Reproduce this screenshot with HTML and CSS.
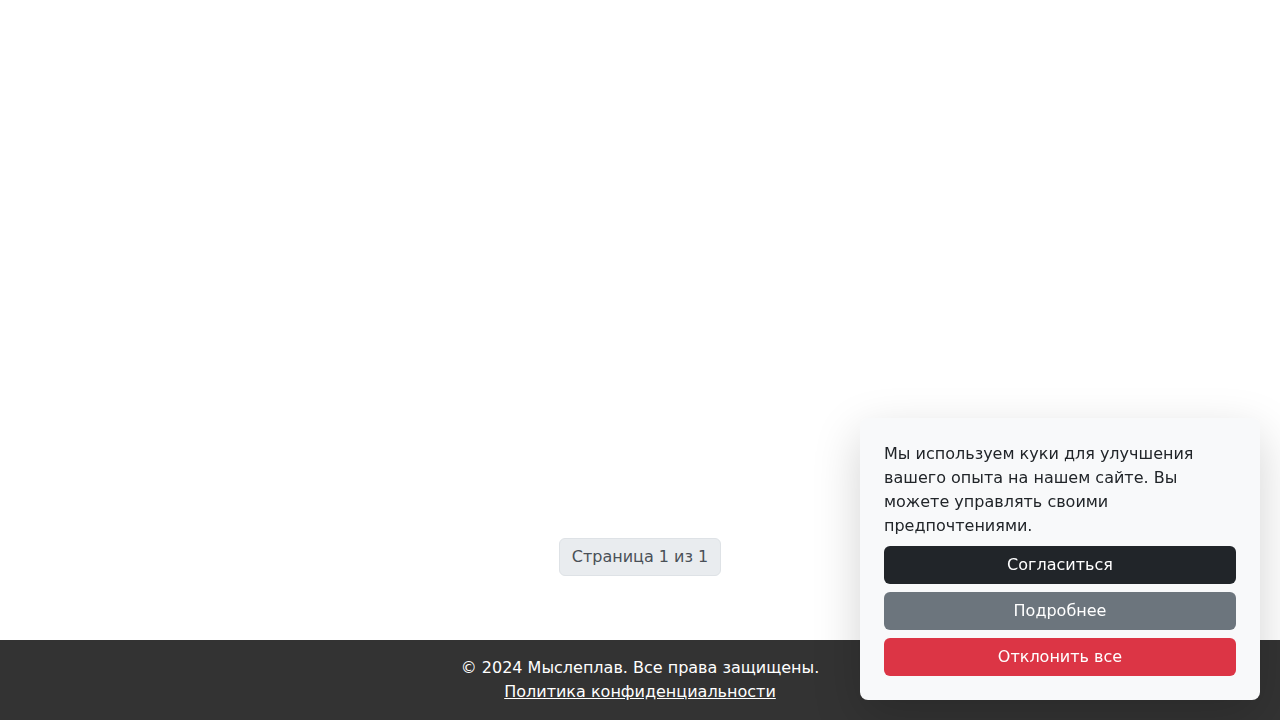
FILE: index.html
```html
<!DOCTYPE html>
<html lang="ru">
<head>
<meta charset="utf-8">
<title>Мыслеплав</title>
<link rel="stylesheet" href="styles.css">
</head>
<body>
<div class="page">
  <main class="main">
    <nav class="pager">
      <span class="pager-item">Страница 1 из 1</span>
    </nav>
  </main>
  <footer class="footer">
    <p class="footer-line">© 2024 Мыслеплав. Все права защищены.</p>
    <p class="footer-line"><a class="footer-link" href="#">Политика конфиденциальности</a></p>
  </footer>
</div>
<div class="cookie">
  <p class="cookie-text">Мы используем куки для улучшения вашего опыта на нашем сайте. Вы можете управлять своими предпочтениями.</p>
  <button class="btn btn-dark">Согласиться</button>
  <button class="btn btn-gray">Подробнее</button>
  <button class="btn btn-red">Отклонить все</button>
</div>
</body>
</html>
```
FILE: styles.css
```css
* { box-sizing: border-box; }
html, body { margin: 0; padding: 0; }
body {
  font-family: "DejaVu Sans", sans-serif;
  font-size: 16px;
  line-height: 24px;
  color: #212529;
  background: #fff;
}
.page {
  min-height: 100vh;
  display: flex;
  flex-direction: column;
}
.main {
  flex: 1;
  display: flex;
  flex-direction: column;
  justify-content: flex-end;
  align-items: center;
  padding-bottom: 64px;
}
.pager { display: flex; }
.pager-item {
  display: block;
  padding: 6px 12px;
  background: #e9ecef;
  border: 1px solid #dee2e6;
  border-radius: 6px;
  color: #495057;
}
.footer {
  background: #333333;
  color: #fff;
  text-align: center;
  padding: 16px 0;
}
.footer-line { margin: 0; }
.footer-link { color: #fff; text-decoration: underline; }
.cookie {
  position: fixed;
  right: 20px;
  bottom: 20px;
  width: 400px;
  padding: 24px;
  background: #f8f9fa;
  border-radius: 8px;
  box-shadow: 0 16px 48px rgba(0, 0, 0, 0.175);
  display: flex;
  flex-direction: column;
  gap: 8px;
}
.cookie-text { margin: 0; }
.btn {
  display: block;
  width: 100%;
  height: 38px;
  border: 0;
  border-radius: 6px;
  font-family: inherit;
  font-size: 16px;
  line-height: 24px;
  color: #fff;
  padding: 6px 12px;
}
.btn-dark { background: #212529; }
.btn-gray { background: #6c757d; }
.btn-red { background: #dc3545; }
```
